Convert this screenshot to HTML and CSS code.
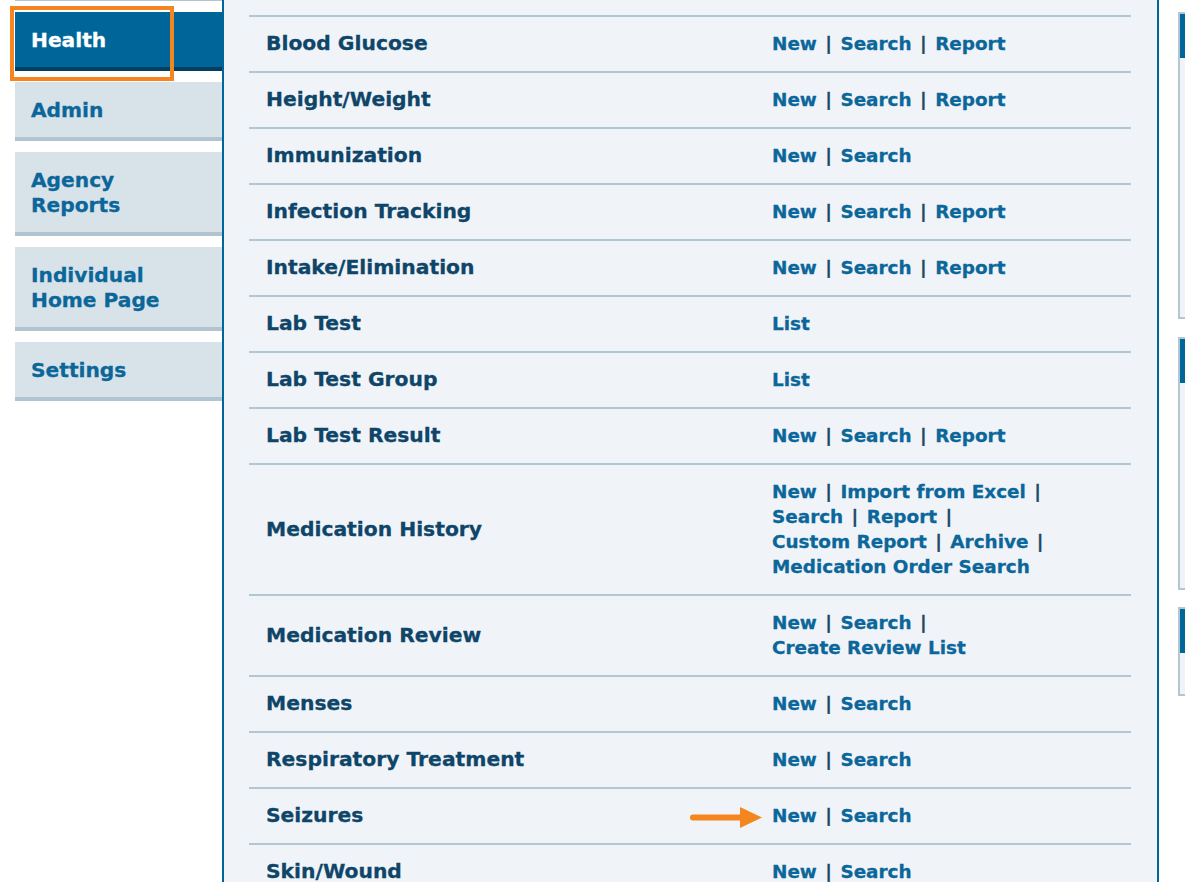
FILE: index.html
```html
<!DOCTYPE html>
<html lang="en">
<head>
<meta charset="utf-8">
<title>Health</title>
<link rel="stylesheet" href="styles.css">
</head>
<body>
<div class="page">
  <nav class="sidebar">
    <div class="tab-stub"></div>
    <a class="tab active" href="#">Health</a>
    <a class="tab" href="#">Admin</a>
    <a class="tab" href="#">Agency<br>Reports</a>
    <a class="tab" href="#">Individual<br>Home Page</a>
    <a class="tab" href="#">Settings</a>
    <div class="highlight"></div>
  </nav>

  <main class="main">
    <div class="row">
      <div class="label">Blood Glucose</div>
      <div class="links"><span class="it"><a href="#">New</a> <span class="sep">|</span></span> <span class="it"><a href="#">Search</a> <span class="sep">|</span></span> <span class="it"><a href="#">Report</a></span></div>
    </div>
    <div class="row">
      <div class="label">Height/Weight</div>
      <div class="links"><span class="it"><a href="#">New</a> <span class="sep">|</span></span> <span class="it"><a href="#">Search</a> <span class="sep">|</span></span> <span class="it"><a href="#">Report</a></span></div>
    </div>
    <div class="row">
      <div class="label">Immunization</div>
      <div class="links"><span class="it"><a href="#">New</a> <span class="sep">|</span></span> <span class="it"><a href="#">Search</a></span></div>
    </div>
    <div class="row">
      <div class="label">Infection Tracking</div>
      <div class="links"><span class="it"><a href="#">New</a> <span class="sep">|</span></span> <span class="it"><a href="#">Search</a> <span class="sep">|</span></span> <span class="it"><a href="#">Report</a></span></div>
    </div>
    <div class="row">
      <div class="label">Intake/Elimination</div>
      <div class="links"><span class="it"><a href="#">New</a> <span class="sep">|</span></span> <span class="it"><a href="#">Search</a> <span class="sep">|</span></span> <span class="it"><a href="#">Report</a></span></div>
    </div>
    <div class="row">
      <div class="label">Lab Test</div>
      <div class="links"><span class="it"><a href="#">List</a></span></div>
    </div>
    <div class="row">
      <div class="label">Lab Test Group</div>
      <div class="links"><span class="it"><a href="#">List</a></span></div>
    </div>
    <div class="row">
      <div class="label">Lab Test Result</div>
      <div class="links"><span class="it"><a href="#">New</a> <span class="sep">|</span></span> <span class="it"><a href="#">Search</a> <span class="sep">|</span></span> <span class="it"><a href="#">Report</a></span></div>
    </div>
    <div class="row">
      <div class="label">Medication History</div>
      <div class="links"><span class="it"><a href="#">New</a> <span class="sep">|</span></span> <span class="it"><a href="#">Import from Excel</a> <span class="sep">|</span></span> <span class="it"><a href="#">Search</a> <span class="sep">|</span></span> <span class="it"><a href="#">Report</a> <span class="sep">|</span></span> <span class="it"><a href="#">Custom Report</a> <span class="sep">|</span></span> <span class="it"><a href="#">Archive</a> <span class="sep">|</span></span> <span class="it"><a href="#">Medication Order Search</a></span></div>
    </div>
    <div class="row">
      <div class="label">Medication Review</div>
      <div class="links"><span class="it"><a href="#">New</a> <span class="sep">|</span></span> <span class="it"><a href="#">Search</a> <span class="sep">|</span></span> <span class="it"><a href="#">Create Review List</a></span></div>
    </div>
    <div class="row">
      <div class="label">Menses</div>
      <div class="links"><span class="it"><a href="#">New</a> <span class="sep">|</span></span> <span class="it"><a href="#">Search</a></span></div>
    </div>
    <div class="row">
      <div class="label">Respiratory Treatment</div>
      <div class="links"><span class="it"><a href="#">New</a> <span class="sep">|</span></span> <span class="it"><a href="#">Search</a></span></div>
    </div>
    <div class="row">
      <div class="label">Seizures</div>
      <div class="links"><span class="it"><a href="#">New</a> <span class="sep">|</span></span> <span class="it"><a href="#">Search</a></span></div>
      <svg class="arrow" width="72" height="21" viewBox="0 0 72 21" aria-hidden="true">
        <line x1="3" y1="10.5" x2="54" y2="10.5" stroke="#f5861f" stroke-width="6" stroke-linecap="round"/>
        <polygon points="50,0 72,10.5 50,21" fill="#f5861f"/>
      </svg>
    </div>
    <div class="row">
      <div class="label">Skin/Wound</div>
      <div class="links"><span class="it"><a href="#">New</a> <span class="sep">|</span></span> <span class="it"><a href="#">Search</a></span></div>
    </div>
  </main>

  <aside class="right">
    <div class="panel p1"><div class="panel-head"></div></div>
    <div class="panel p2"><div class="panel-head"></div></div>
    <div class="panel p3"><div class="panel-head"></div></div>
  </aside>
</div>
</body>
</html>
```

FILE: styles.css
```css
html, body {
  margin: 0;
  padding: 0;
  overflow: hidden;
  background: #ffffff;
  height: 882px;
}

body {
  font-family: "DejaVu Sans", Verdana, sans-serif;
  font-weight: bold;
}

.page {
  display: flex;
  align-items: flex-start;
  width: 1500px;
  height: 882px;
}

/* Sidebar */
.sidebar {
  position: relative;
  display: flex;
  flex-direction: column;
  gap: 11px;
  width: 207px;
  margin-left: 15px;
  flex-shrink: 0;
}

.tab-stub {
  height: 1px;
  background: #b1c4d0;
}

.tab {
  display: block;
  padding: 16px 16px 14px;
  font-size: 20.2px;
  line-height: 25px;
  text-decoration: none;
  color: #0b669a;
  background: #d7e2e9;
  border-bottom: 4px solid #b1c4d0;
  -webkit-text-stroke: 0.3px currentColor;
}

.tab.active {
  color: #ffffff;
  background: #006699;
  border-bottom-color: #023e5e;
}

.highlight {
  position: absolute;
  left: -5px;
  top: 6px;
  width: 164px;
  height: 75px;
  box-sizing: border-box;
  border: 4px solid #f5861f;
}

/* Main */
.main {
  width: 882px;
  height: 867px;
  flex-shrink: 0;
  padding: 15px 26px 0 25px;
  background: #f0f4f8;
  border-left: 2px solid #006699;
  border-right: 2px solid #006699;
  overflow: hidden;
}

.row {
  position: relative;
  display: grid;
  grid-template-columns: 523px 1fr;
  align-items: center;
  padding: 14px 0 15px;
  border-top: 2px solid #b3c7d3;
}

.label {
  padding-left: 17px;
  font-size: 20.3px;
  line-height: 25px;
  color: #0e4568;
  -webkit-text-stroke: 0.3px currentColor;
}

.links {
  max-width: 300px;
  font-size: 18.4px;
  line-height: 25px;
  color: #1b4a6b;
  -webkit-text-stroke: 0.3px currentColor;
}

.links a {
  color: #0b669a;
  text-decoration: none;
}

.it {
  white-space: nowrap;
}

.sep {
  margin: 0 2px;
  color: #1d4866;
}

.arrow {
  position: absolute;
  left: 441px;
  top: 18px;
}

/* Right panels */
.right {
  display: flex;
  flex-direction: column;
  margin-left: 19px;
  padding-top: 12px;
  flex-shrink: 0;
}

.panel {
  width: 300px;
  background: #f0f4f8;
  border: 2px solid #b3c7d3;
  box-sizing: border-box;
}

.panel-head {
  height: 44px;
  background: #006699;
}

.p1 { height: 307px; }
.p2 { height: 253px; margin-top: 18px; }
.p3 { height: 89px; margin-top: 17px; }
```
